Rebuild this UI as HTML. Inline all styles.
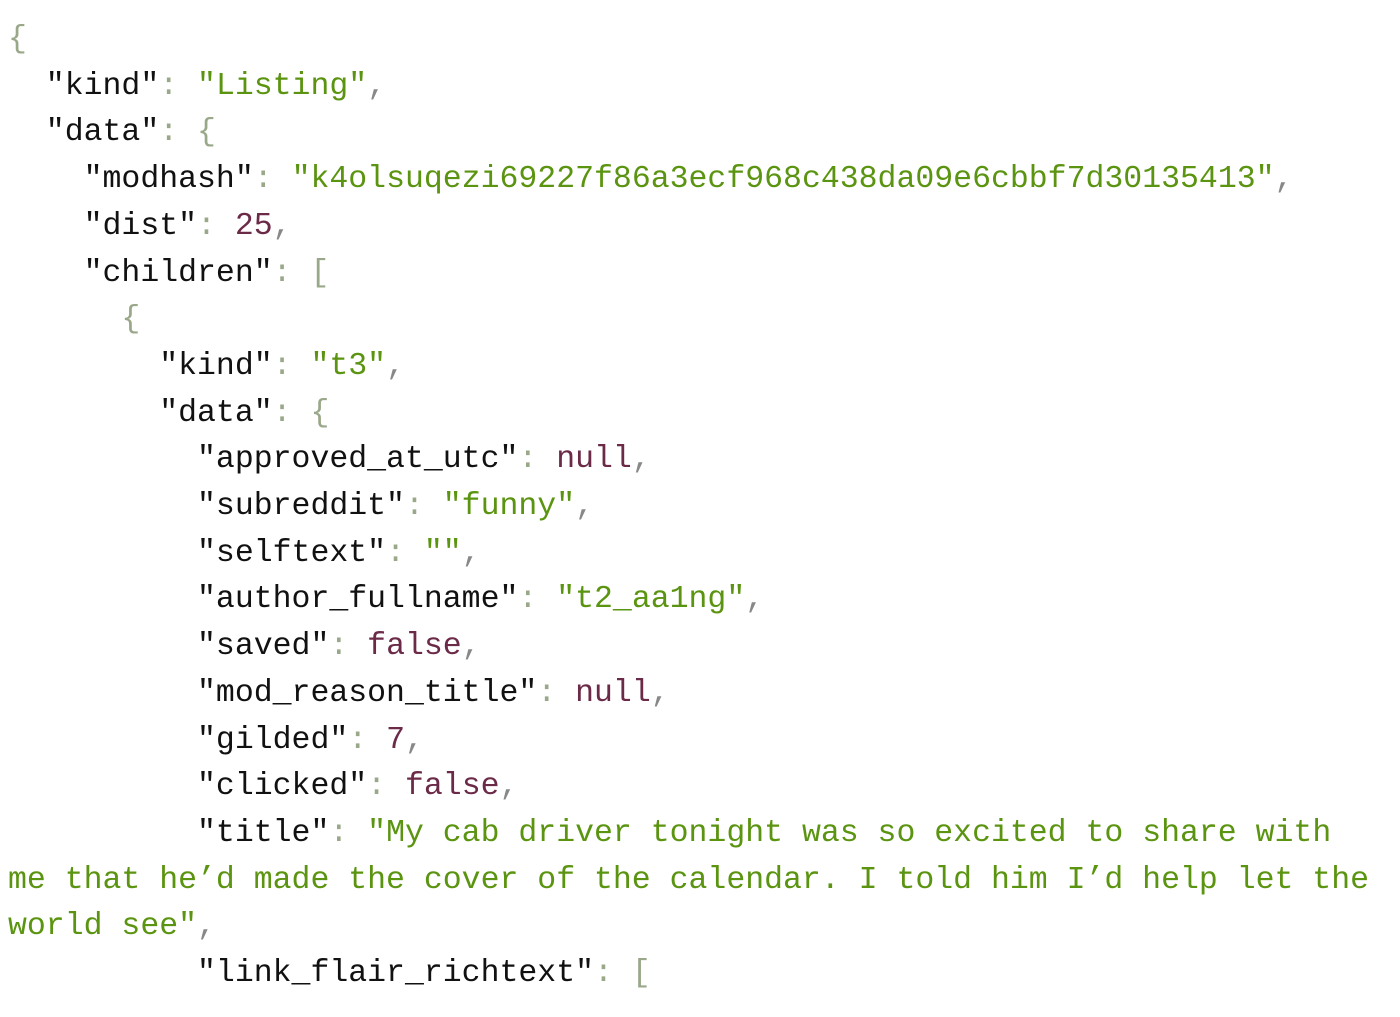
<!DOCTYPE html>
<html><head><style>
html,body{margin:0;background:#fff;}
pre{margin:0;position:absolute;left:8px;top:17px;font-family:"Liberation Mono",monospace;font-size:31.5px;line-height:46.7px;color:#111;white-space:pre;}
.p{color:#9aa88a}.s{color:#5b9410}.n{color:#6b2a47}.c{color:#888}
</style></head><body>
<pre><span class="p">{</span>
  "kind"<span class="p">:</span> <span class="s">"Listing"</span><span class="c">,</span>
  "data"<span class="p">:</span> <span class="p">{</span>
    "modhash"<span class="p">:</span> <span class="s">"k4olsuqezi69227f86a3ecf968c438da09e6cbbf7d30135413"</span><span class="c">,</span>
    "dist"<span class="p">:</span> <span class="n">25</span><span class="c">,</span>
    "children"<span class="p">:</span> <span class="p">[</span>
      <span class="p">{</span>
        "kind"<span class="p">:</span> <span class="s">"t3"</span><span class="c">,</span>
        "data"<span class="p">:</span> <span class="p">{</span>
          "approved_at_utc"<span class="p">:</span> <span class="n">null</span><span class="c">,</span>
          "subreddit"<span class="p">:</span> <span class="s">"funny"</span><span class="c">,</span>
          "selftext"<span class="p">:</span> <span class="s">""</span><span class="c">,</span>
          "author_fullname"<span class="p">:</span> <span class="s">"t2_aa1ng"</span><span class="c">,</span>
          "saved"<span class="p">:</span> <span class="n">false</span><span class="c">,</span>
          "mod_reason_title"<span class="p">:</span> <span class="n">null</span><span class="c">,</span>
          "gilded"<span class="p">:</span> <span class="n">7</span><span class="c">,</span>
          "clicked"<span class="p">:</span> <span class="n">false</span><span class="c">,</span>
          "title"<span class="p">:</span> <span class="s">"My cab driver tonight was so excited to share with</span>
<span class="s">me that he’d made the cover of the calendar. I told him I’d help let the</span>
<span class="s">world see"</span><span class="c">,</span>
          "link_flair_richtext"<span class="p">:</span> <span class="p">[</span></pre>
</body></html>
